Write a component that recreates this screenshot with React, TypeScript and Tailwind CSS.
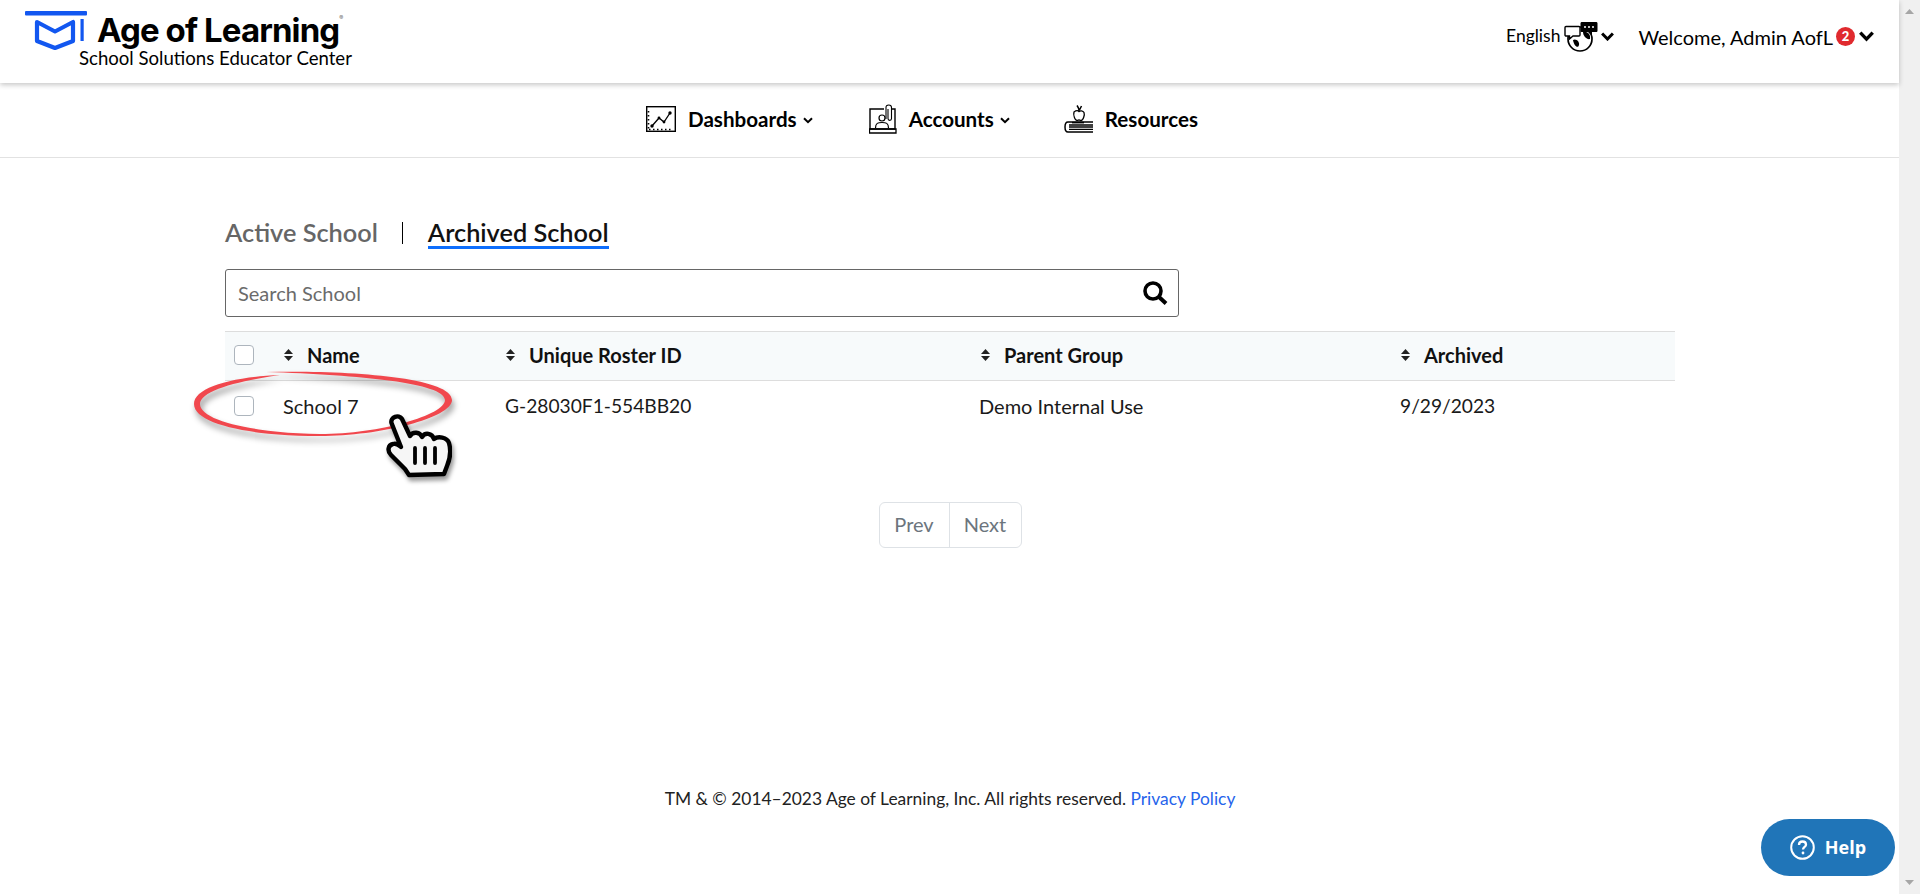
const Sort = () => (
  <svg width="9" height="12" viewBox="0 0 9 12" className="shrink-0 text-[#222]" fill="currentColor">
    <path d="M4.5 0 L9 5 H0 Z" />
    <path d="M4.5 12 L0 7 H9 Z" />
  </svg>
);

const SmallChevron = ({ w = 10 }: { w?: number }) => (
  <svg width={w} height={w * 0.7} viewBox="0 0 10 7" fill="none" stroke="#000" strokeWidth="2" className="shrink-0">
    <path d="M1 1.2 L5 5.2 L9 1.2" />
  </svg>
);

const BigChevron = ({ w = 14 }: { w?: number }) => (
  <svg width={w} height={w * 0.72} viewBox="0 0 14 10" fill="none" stroke="#000" strokeWidth="3.2" className="shrink-0">
    <path d="M1.2 1.5 L7 7.5 L12.8 1.5" />
  </svg>
);

const Logo = () => (
  <svg width="62" height="40" viewBox="25 11 62 40" className="shrink-0" fill="none">
    <rect x="25" y="11" width="62" height="4.5" rx="1" fill="#1257f0" />
    <path d="M37 22 L55 31.5 L73 22 V41 L55 48 L37 41 Z" stroke="#1257f0" strokeWidth="4.2" strokeLinejoin="round" />
    <rect x="80.5" y="19" width="3.2" height="22" fill="#1257f0" />
  </svg>
);

const GlobeChat = () => (
  <svg width="34" height="31" viewBox="0 0 34 31" fill="none" className="shrink-0">
    <circle cx="16" cy="18" r="12" fill="#fff" stroke="#000" strokeWidth="1.7" />
    <path d="M9 19 C12 17 16 21 15 24 C14 28 10 25 9 19 Z M19 11 C23 10 27 13 26 18 C23 19 19 15 19 11 Z" fill="#000" />
    <path d="M1 6.5 C1 6 1.5 5.5 2 5.5 H15 C15.5 5.5 16 6 16 6.5 V14 C16 14.5 15.5 15 15 15 H9 L5.5 18 V15 H2 C1.5 15 1 14.5 1 14 Z" fill="#fff" stroke="#000" strokeWidth="1.4" />
    <path d="M18 1 H32 C33 1 33.5 1.5 33.5 2.5 V9.5 C33.5 10.5 33 11 32 11 H28 V15 L24 11 H18 C17 11 16.5 10.5 16.5 9.5 V2.5 C16.5 1.5 17 1 18 1 Z" fill="#000" />
    <circle cx="21" cy="6" r="1" fill="#fff" />
    <circle cx="25" cy="6" r="1" fill="#fff" />
    <circle cx="29" cy="6" r="1" fill="#fff" />
  </svg>
);

const ChartIcon = () => (
  <svg width="30" height="26" viewBox="0 0 30 26" fill="none" className="shrink-0">
    <rect x="0.7" y="0.7" width="28.6" height="24.6" stroke="#000" strokeWidth="1.4" />
    <path d="M3 23.5 H27 M2.5 5 V23" stroke="#000" strokeWidth="1.6" strokeDasharray="1.5 2.5" />
    <path d="M6 20 L13 12 L18 16 L24 7" stroke="#000" strokeWidth="1.3" />
    <circle cx="6" cy="20" r="1.7" fill="#000" />
    <circle cx="13" cy="12" r="1.4" fill="#000" />
    <circle cx="18" cy="16" r="1.4" fill="#000" />
    <circle cx="24" cy="7" r="1.7" fill="#000" />
  </svg>
);

const AccountIcon = () => (
  <svg width="28" height="30" viewBox="0 0 28 30" fill="none" className="shrink-0">
    <path d="M15 5 H1 V25 H26 V5 H23" stroke="#000" strokeWidth="1.4" />
    <path d="M0.5 25 H27 V29 H0.5 Z" stroke="#000" strokeWidth="1.3" />
    <circle cx="13" cy="14" r="3" stroke="#000" strokeWidth="1.2" />
    <path d="M6.5 24 C6.5 19 9 18.5 13 18.5 C17 18.5 19.5 19 19.5 24" stroke="#000" strokeWidth="1.2" />
    <path d="M17 15 V3.5 C17 0.2 22.5 0.2 22.5 3.5 V14.5 C22.5 17 19 17 19 14.5 V5" stroke="#000" strokeWidth="1.1" />
  </svg>
);

const BookIcon = () => (
  <svg width="30" height="28" viewBox="0 0 30 28" fill="none" className="shrink-0">
    <path d="M11 7 C13 5.5 15 5.5 16 6.5 C17 5.5 20 5.5 21 7.5 C22 10 20 15.5 18 15.5 C17 15.5 16.5 15 16 15 C15.5 15 15 15.5 14 15.5 C12 15.5 10 10 11 7 Z" stroke="#000" strokeWidth="1.3" />
    <path d="M16 6 C16 3 15 2 14 0.5 M16.5 5 L18.5 1" stroke="#000" strokeWidth="1.5" />
    <path d="M9 17.6 H21" stroke="#000" strokeWidth="1.6" />
    <path d="M30 17 H5 C1 17 1 27 5 27 H30" stroke="#000" strokeWidth="1.5" />
    <path d="M6 20 H30 M6 22 H30 M6 24.3 H30" stroke="#000" strokeWidth="1.3" />
  </svg>
);

const SearchIcon = () => (
  <svg width="25" height="24" viewBox="0 0 25 24" fill="none" stroke="#000" className="shrink-0">
    <circle cx="10" cy="10" r="8" strokeWidth="3.6" />
    <path d="M15.5 15.5 L23 22.5" strokeWidth="4" />
  </svg>
);

const Check = () => <span className="block w-[20px] h-[20px] rounded-[4px] border border-[#adb5bd] bg-white" />;

const Annotation = () => (
  <div className="absolute left-[190px] top-[368px] w-[270px] h-[116px] pointer-events-none">
    <svg width="270" height="75" viewBox="0 0 270 75" className="absolute left-0 top-0 drop-shadow-[2px_5px_3px_rgba(0,0,0,0.4)]">
      <path
        d="M76 4 C150 2 262 8 262 32 C262 50 190 68 130 68 C60 68 4 56 4 36 C4 20 40 9 90 7 C47 13 10 23 10 36 C10 53 65 65 130 66 C190 66 255 47 255 32 C255 15 170 7 76 4 Z"
        fill="#f1474d"
      />
    </svg>
    <svg width="66" height="66" viewBox="-1 -2 66 66" className="absolute left-[196px] top-[44px] drop-shadow-[2px_4px_2px_rgba(0,0,0,0.4)]">
      <path
        d="M4.5 9 C3 3 12 0 15 5 L23 22 C26 17 33 18 35 23 C38 18 45 19 47 25 C51 22 60 23 62 29 C64 36 63 45 60 52 L57 60 L22 61 L18 55 L4 41 C0 37 1 31 6 30 C9 29 12 31 14 33 Z"
        fill="#f6f6f6"
        stroke="#000"
        strokeWidth="4.4"
        strokeLinejoin="round"
      />
      <path d="M28 34 V49 M38 34 V49 M48 34 V49" stroke="#000" strokeWidth="3.8" strokeLinecap="round" />
    </svg>
  </div>
);

const F = "font-['Lato','Liberation_Sans',sans-serif]";

export default function App() {
  return (
    <div className={`relative flex h-[894px] overflow-hidden bg-white text-black ${F}`}>
      <div className="flex-1 min-w-0 flex flex-col">
        <header className="relative z-10 h-[83px] shrink-0 bg-white shadow-[0_2px_5px_rgba(0,0,0,0.22)] flex justify-between pl-[25px] pr-[25px]">
          <div className="flex pt-[11px]">
            <Logo />
            <div className="flex flex-col -ml-[8px]">
              <div className="ml-[18px] text-[33px] leading-[36px] font-bold font-['Inter','Lato',sans-serif] tracking-[-0.9px] mt-[1px]">
                Age of Learning<sup className="text-[6px] text-[#777] align-top relative top-[6px]">®</sup>
              </div>
              <div className="text-[18.6px] leading-[20px] whitespace-nowrap">School Solutions Educator Center</div>
            </div>
          </div>
          <div className="flex items-center pb-[10px]">
            <span className="text-[17.5px]">English</span>
            <span className="ml-[4px] flex items-center"><GlobeChat /></span>
            <span className="ml-[3px]"><BigChevron w={13} /></span>
            <span className="ml-[24px] text-[20px] whitespace-nowrap">Welcome, Admin AofL</span>
            <span className="ml-[3px] w-[19px] h-[19px] rounded-full bg-[#e02a2e] text-white text-[13px] font-black flex items-center justify-center">2</span>
            <span className="ml-[4px]"><BigChevron w={15} /></span>
          </div>
        </header>

        <nav className="h-[75px] shrink-0 border-b border-[#e2e2e2] flex items-center justify-center pr-[55px] pb-[2px]">
          <div className="flex items-center">
            <ChartIcon />
            <span className="ml-[12px] text-[20.6px] font-bold">Dashboards</span>
            <span className="ml-[6px] mt-[3px]"><SmallChevron /></span>
          </div>
          <div className="flex items-center ml-[56px]">
            <AccountIcon />
            <span className="ml-[12px] text-[20.6px] font-bold">Accounts</span>
            <span className="ml-[6px] mt-[3px]"><SmallChevron /></span>
          </div>
          <div className="flex items-center ml-[53px]">
            <BookIcon />
            <span className="ml-[12px] text-[20.6px] font-bold">Resources</span>
          </div>
        </nav>

        <main className="pl-[225px] pr-[224px] flex-1 flex flex-col">
          <div className="mt-[60px] flex items-center h-[30px] text-[25.3px] font-semibold">
            <span className="text-[#666]">Active School</span>
            <span className="ml-[24px] h-[22px] w-px bg-black" />
            <span className="ml-[25px] relative text-[#111] border-b-[3px] border-[#0d6efd] leading-[28px] h-[31px]">Archived School</span>
          </div>

          <div className="mt-[21px] w-[954px] h-[48px] rounded-[3px] border border-[#666] flex items-center justify-between pl-[12px] pr-[10px] pb-[1px]">
            <span className="text-[20px] text-[#6b6b6b]">Search School</span>
            <SearchIcon />
          </div>

          <table className="mt-[14px] w-[1450px] table-fixed border-collapse text-[19.2px] leading-[24px]">
            <thead>
              <tr className="h-[49px] bg-[#f7fafb] border-y border-[#ddd] text-left text-[#111]">
                <th className="w-[41px] pl-[9px] pb-[2px] font-normal"><Check /></th>
                <th className="w-[222px] pl-[18px] pb-[2px] font-bold text-[20px]">
                  <span className="flex items-center gap-[14px]"><Sort />Name</span>
                </th>
                <th className="w-[474px] pl-[18px] pb-[2px] font-bold text-[20px]">
                  <span className="flex items-center gap-[14px]"><Sort />Unique Roster ID</span>
                </th>
                <th className="w-[421px] pl-[19px] pb-[2px] font-bold text-[20px]">
                  <span className="flex items-center gap-[14px]"><Sort />Parent Group</span>
                </th>
                <th className="pl-[18px] pb-[2px] font-bold text-[20px]">
                  <span className="flex items-center gap-[14px]"><Sort />Archived</span>
                </th>
              </tr>
            </thead>
            <tbody>
              <tr className="h-[50px] text-[#1a1a1a]">
                <td className="pl-[9px]"><Check /></td>
                <td className="pl-[17px] text-[20px]">School 7</td>
                <td className="pl-[17px]">G-28030F1-554BB20</td>
                <td className="pl-[17px] text-[20px]">Demo Internal Use</td>
                <td className="pl-[17px]">9/29/2023</td>
              </tr>
            </tbody>
          </table>

          <div className="mt-[71px] flex justify-center">
            <div className="flex h-[46px] rounded-[6px] border border-[#dee2e6] text-[20px] leading-[26px] text-[#6c757d]">
              <span className="w-[70px] flex items-center justify-center border-r border-[#dee2e6] pb-[2px]">Prev</span>
              <span className="w-[71px] flex items-center justify-center pb-[2px]">Next</span>
            </div>
          </div>

          <footer className="mt-[238px] text-center text-[17.4px] text-[#222]">
            TM &amp; © 2014–2023 Age of Learning, Inc. All rights reserved. <span className="text-[#2563eb]">Privacy Policy</span>
          </footer>
        </main>
      </div>

      <aside className="w-[21px] shrink-0 bg-[#f0f0f0] flex flex-col justify-between items-center py-[9px]">
        <svg width="9" height="5" viewBox="0 0 9 5" fill="#a6a6a6"><path d="M4.5 0 L9 5 H0 Z" /></svg>
        <svg width="9" height="5" viewBox="0 0 9 5" fill="#a6a6a6"><path d="M4.5 5 L0 0 H9 Z" /></svg>
      </aside>

      <Annotation />

      <button className="absolute left-[1761px] top-[819px] w-[134px] h-[57px] rounded-full bg-[#2075b8] text-white flex items-center justify-center gap-[10px] font-['Open_Sans',sans-serif] font-bold text-[18px]">
        <svg width="25" height="25" viewBox="0 0 25 25" fill="none" stroke="#fff" strokeWidth="2">
          <circle cx="12.5" cy="12.5" r="11.3" />
          <path d="M9 10 C9 7.5 10.5 6.5 12.5 6.5 C14.5 6.5 16 7.8 16 9.7 C16 12 13 12 13 14.6" strokeWidth="2.3" />
          <circle cx="13" cy="18" r="1.4" fill="#fff" stroke="none" />
        </svg>
        Help
      </button>
    </div>
  );
}
